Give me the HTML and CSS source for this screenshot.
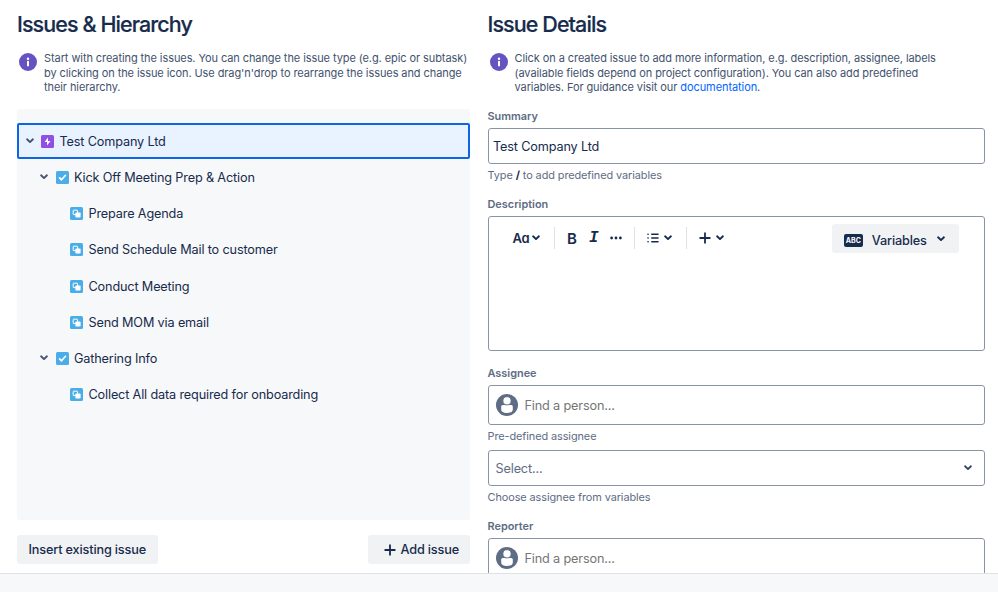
FILE: index.html
```html
<!DOCTYPE html>
<html lang="en">
<head>
    <meta charset="UTF-8">
    <meta name="viewport" content="width=device-width, initial-scale=1.0">
    <title>Issues &amp; Hierarchy</title>
    <link rel="stylesheet" href="styles.css">
</head>
<body>
    <!-- shared icons -->
    <svg class="defs">
        <symbol id="chevron" viewBox="0 0 8 6"><path d="M1.1 1.3 4 4.1 6.9 1.3" fill="none" stroke="currentColor" stroke-width="1.9" stroke-linecap="round" stroke-linejoin="round"/></symbol>
        <symbol id="info" viewBox="0 0 18 18"><circle cx="9" cy="9" r="9" fill="#6554c0"/><circle cx="9" cy="5.7" r="1.2" fill="#fff"/><rect x="8" y="7.8" width="2" height="5.6" rx=".8" fill="#fff"/></symbol>
        <symbol id="epic" viewBox="0 0 13 13"><rect width="13" height="13" rx="1.5" fill="#904ee2"/><path d="M7 2.6 3.5 7.1H6V10.4L9.5 5.9H7Z" fill="#fff"/></symbol>
        <symbol id="task" viewBox="0 0 13 13"><rect width="13" height="13" rx="1.5" fill="#4bade8"/><path d="M3.6 6.9 5.5 8.8 9.5 4.3" fill="none" stroke="#fff" stroke-width="1.7" stroke-linecap="round" stroke-linejoin="round"/></symbol>
        <symbol id="subtask" viewBox="0 0 13 13"><rect width="13" height="13" rx="1.5" fill="#4bade8"/><rect x="3.2" y="3.2" width="4.4" height="4.4" rx=".4" fill="none" stroke="#fff" stroke-width="1"/><rect x="5.4" y="5.4" width="5.2" height="5.2" rx=".8" fill="#fff"/></symbol>
        <symbol id="plus" viewBox="0 0 12 12"><path d="M6 1.2V10.8M1.2 6H10.8" fill="none" stroke="currentColor" stroke-width="1.8" stroke-linecap="round"/></symbol>
        <symbol id="person" viewBox="0 0 22 22"><circle cx="11" cy="11" r="11" fill="#5e6c84"/><path d="M5.2 12.6Q5.2 11 6.8 11H15.2Q16.8 11 16.8 12.6V15.5Q16.8 18.9 11 18.9T5.2 15.5Z" fill="#fff"/><circle cx="11" cy="6.8" r="4.1" fill="#fff" stroke="#5e6c84" stroke-width=".9"/></symbol>
    </svg>

    <div class="content">
        <div class="hierarchy">
            <h1>Issues &amp; Hierarchy</h1>
            <div class="hint">
                <svg class="info"><use href="#info"/></svg>
                <p>Start with creating the issues. You can change the issue type (e.g. epic or subtask)<br>by clicking on the issue icon. Use drag'n'drop to rearrange the issues and change<br>their hierarchy.</p>
            </div>

            <ul class="tree">
                <li class="selected"><svg class="chevron"><use href="#chevron"/></svg><svg class="type"><use href="#epic"/></svg>Test Company Ltd</li>
                <li class="level2"><svg class="chevron"><use href="#chevron"/></svg><svg class="type"><use href="#task"/></svg>Kick Off Meeting Prep &amp; Action</li>
                <li class="level3"><svg class="type"><use href="#subtask"/></svg>Prepare Agenda</li>
                <li class="level3"><svg class="type"><use href="#subtask"/></svg>Send Schedule Mail to customer</li>
                <li class="level3"><svg class="type"><use href="#subtask"/></svg>Conduct Meeting</li>
                <li class="level3"><svg class="type"><use href="#subtask"/></svg>Send MOM via email</li>
                <li class="level2"><svg class="chevron"><use href="#chevron"/></svg><svg class="type"><use href="#task"/></svg>Gathering Info</li>
                <li class="level3"><svg class="type"><use href="#subtask"/></svg>Collect All data required for onboarding</li>
            </ul>

            <div class="buttons">
                <button class="btn">Insert existing issue</button>
                <button class="btn add"><svg class="plus"><use href="#plus"/></svg>Add issue</button>
            </div>
        </div>

        <div class="details">
            <h1>Issue Details</h1>
            <div class="hint">
                <svg class="info"><use href="#info"/></svg>
                <p>Click on a created issue to add more information, e.g. description, assignee, labels<br>(available fields depend on project configuration). You can also add predefined<br>variables. For guidance visit our <a href="#">documentation</a>.</p>
            </div>

            <label class="label" for="summary">Summary</label>
            <input id="summary" class="box summary" type="text" value="Test Company Ltd">
            <p class="help">Type <b>/</b> to add predefined variables</p>

            <div class="label description">Description</div>
            <div class="box editor">
                <div class="toolbar">
                    <div class="group styles"><span class="aa">Aa</span><svg class="chevron"><use href="#chevron"/></svg></div>
                    <div class="group marks">
                        <span class="bold">B</span><span class="italic">I</span>
                        <svg class="more" viewBox="0 0 12 4"><circle cx="1.6" cy="2" r="1.4"/><circle cx="6" cy="2" r="1.4"/><circle cx="10.4" cy="2" r="1.4"/></svg>
                    </div>
                    <div class="group lists">
                        <svg class="list" viewBox="0 0 12 10"><path d="M4.8 1.2H11M4.8 5H11M4.8 8.8H11" stroke-width="1.6"/><path d="M1 1.2H1.1M1 5H1.1M1 8.8H1.1" stroke-width="1.6"/></svg>
                        <svg class="chevron"><use href="#chevron"/></svg>
                    </div>
                    <div class="group insert"><svg class="plus"><use href="#plus"/></svg><svg class="chevron"><use href="#chevron"/></svg></div>
                </div>
                <button class="btn variables"><span class="abc">ABC</span>Variables<svg class="chevron"><use href="#chevron"/></svg></button>
            </div>

            <label class="label assignee" for="assignee">Assignee</label>
            <div class="box person">
                <svg class="avatar"><use href="#person"/></svg>
                <input id="assignee" type="text" placeholder="Find a person...">
            </div>
            <p class="help">Pre-defined assignee</p>
            <div class="box select"><span>Select...</span><svg class="chevron"><use href="#chevron"/></svg></div>
            <p class="help">Choose assignee from variables</p>

            <label class="label reporter" for="reporter">Reporter</label>
            <div class="box person">
                <svg class="avatar"><use href="#person"/></svg>
                <input id="reporter" type="text" placeholder="Find a person...">
            </div>
        </div>
    </div>
    <div class="footer"></div>
</body>
</html>
```
FILE: styles.css
```css
* {
    padding: 0;
    margin: 0;
    box-sizing: border-box;
}
body {
    height: 592px;
    display: flex;
    flex-direction: column;
    overflow: hidden;
    background: #fff;
    color: #172b4d;
    font-family: Inter, "Liberation Sans", sans-serif;
    font-size: 12.7px;
    letter-spacing: -0.16px;
}
input, button {
    font: inherit;
    color: inherit;
    letter-spacing: inherit;
}
svg {
    display: block;
    flex: none;
}
.defs {
    position: absolute;
    width: 0;
    height: 0;
}
.content {
    height: 573px;
    flex: none;
    display: flex;
    gap: 18px;
    padding: 11px 13px 0 17px;
    overflow: hidden;
}
.footer {
    flex: 1;
    background: #f7f8fa;
    border-top: 1.5px solid #dfe1e6;
}
.hierarchy {
    width: 452.5px;
    flex: none;
}
.details {
    flex: 1;
    min-width: 0;
}

h1 {
    height: 27px;
    line-height: 27px;
    font-size: 21.5px;
    font-weight: 500;
    letter-spacing: -0.92px;
    -webkit-text-stroke: 0.2px #172b4d;
}
.hint {
    display: flex;
    gap: 7px;
    margin-top: 13px;
    padding-left: 2px;
    height: 58px;
    color: #42526e;
    font-size: 11px;
    letter-spacing: -0.085px;
    line-height: 14.5px;
    white-space: nowrap;
}
.hint a {
    color: #0065ff;
    text-decoration: none;
}
.info {
    width: 18px;
    height: 18px;
    margin-top: 2px;
}
.chevron {
    width: 8px;
    height: 6px;
}

.tree {
    height: 411px;
    padding-top: 14px;
    background: #f7f8f9;
    border-radius: 3px;
    list-style: none;
}
.tree li {
    display: flex;
    align-items: center;
    height: 36.25px;
    padding-left: 9px;
}
.tree .selected {
    background: #e9f2ff;
    border: 2px solid #0c66e4;
    border-radius: 2px;
    padding-left: 6.5px;
}
.tree .level2 {
    padding-left: 23px;
}
.tree .level3 {
    padding-left: 53px;
}
.tree .chevron {
    color: #44546f;
    margin: 0 7.5px 1px 0;
}
.type {
    width: 13px;
    height: 13px;
    margin-right: 5.5px;
}

.buttons {
    display: flex;
    justify-content: space-between;
    margin-top: 15px;
}
.btn {
    display: flex;
    align-items: center;
    justify-content: center;
    height: 29px;
    width: 140.5px;
    border: 0;
    border-radius: 3px;
    background: #f1f2f4;
    font-weight: 500;
}
.add {
    width: 101.5px;
    gap: 5px;
    padding-left: 5px;
}
.plus {
    width: 12px;
    height: 12px;
}

.label {
    display: block;
    height: 19px;
    line-height: 14px;
    color: #5e6c84;
    font-size: 10.9px;
    font-weight: 600;
    letter-spacing: 0;
}
.help {
    color: #5e6c84;
    font-size: 10.9px;
    letter-spacing: -0.08px;
    line-height: 14px;
    margin-top: 4px;
}
.help b {
    color: #172b4d;
}
.box {
    width: 100%;
    border: 1px solid #8993a8;
    border-radius: 3px;
    background: #fff;
}
.summary {
    display: block;
    height: 36px;
    padding-left: 4.5px;
}
.description {
    margin-top: 15px;
}
.editor {
    display: flex;
    justify-content: space-between;
    height: 135px;
    padding: 7px 25px 0 14px;
}
.toolbar {
    display: flex;
    height: 28px;
    align-items: center;
}
.group {
    display: flex;
    align-items: center;
    height: 22px;
}
.group + .group {
    border-left: 1px solid #dfe1e6;
}
.styles {
    width: 51px;
    padding-left: 10px;
}
.aa {
    font-weight: 600;
    font-size: 13px;
    font-feature-settings: "cv11";
    margin-right: 2px;
}
.marks {
    width: 80px;
    padding-left: 12.5px;
}
.bold {
    width: 22px;
    font-size: 15px;
    font-weight: 600;
}
.italic {
    width: 20.5px;
    font: italic bold 16px "Liberation Mono", monospace;
}
.more {
    width: 12px;
    height: 4px;
    fill: currentColor;
}
.lists {
    width: 52px;
    gap: 5px;
    padding-left: 12px;
}
.list {
    width: 12px;
    height: 10px;
    fill: none;
    stroke: currentColor;
    stroke-linecap: round;
}
.insert {
    gap: 5px;
    padding-left: 12px;
}
.variables {
    width: 127.5px;
    padding: 3px 1.5px 0 0;
}
.variables .chevron {
    margin: 0 0 3px 10.5px;
}
.abc {
    width: 19px;
    height: 13px;
    margin-right: 9px;
    border-radius: 2px;
    background: #172b4d;
    color: #fff;
    font-size: 7px;
    font-weight: 700;
    letter-spacing: 0;
    line-height: 13px;
    text-align: center;
}
.assignee {
    margin-top: 15px;
}
.person {
    display: flex;
    align-items: center;
    gap: 7px;
    height: 40px;
    padding-left: 7px;
}
.avatar {
    width: 22px;
    height: 22px;
}
.person input {
    flex: 1;
    border: 0;
    outline: 0;
}
.person input::placeholder {
    color: #757575;
}
.select {
    display: flex;
    align-items: center;
    justify-content: space-between;
    height: 36px;
    margin-top: 7px;
    padding: 0 12px 0 7px;
    color: #5e6c84;
}
.select .chevron {
    color: #344563;
}
.reporter {
    margin-top: 15px;
}
```
